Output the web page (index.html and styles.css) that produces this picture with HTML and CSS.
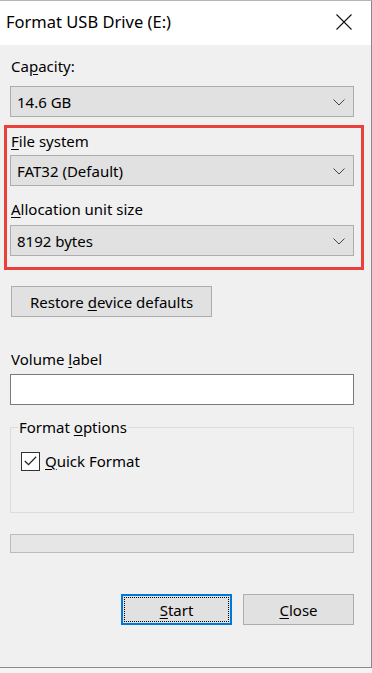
FILE: index.html
```html
<!DOCTYPE html>
<html lang="en">
<head>
  <meta charset="UTF-8" />
  <meta name="viewport" content="width=device-width, initial-scale=1.0" />
  <title>Format USB Drive (E:)</title>
  <link rel="stylesheet" href="styles.css">
</head>
<body>
  <div class="window">
    <div class="titlebar">
      <span class="title">Format USB Drive (E:)</span>
      <svg class="close-x" width="16" height="16" viewBox="0 0 16 16">
        <path d="M0.5 0.5 L15.5 15.5 M15.5 0.5 L0.5 15.5" stroke="#111" stroke-width="1.1" fill="none" />
      </svg>
    </div>

    <div class="content">
      <label class="field-label">Ca<u>p</u>acity:</label>
      <div class="select">
        <span>14.6 GB</span>
        <svg class="chevron" width="12" height="7" viewBox="0 0 12 7"><path d="M0.5 0.5 L6 6 L11.5 0.5" stroke="#444" fill="none" /></svg>
      </div>

      <div class="highlight">
        <label class="field-label"><u>F</u>ile system</label>
        <div class="select">
          <span>FAT32 (Default)</span>
          <svg class="chevron" width="12" height="7" viewBox="0 0 12 7"><path d="M0.5 0.5 L6 6 L11.5 0.5" stroke="#444" fill="none" /></svg>
        </div>
        <label class="field-label"><u>A</u>llocation unit size</label>
        <div class="select">
          <span>8192 bytes</span>
          <svg class="chevron" width="12" height="7" viewBox="0 0 12 7"><path d="M0.5 0.5 L6 6 L11.5 0.5" stroke="#444" fill="none" /></svg>
        </div>
      </div>

      <button class="btn restore">Restore <u>d</u>evice defaults</button>

      <label class="field-label volume">Volume <u>l</u>abel</label>
      <div class="textbox"></div>

      <fieldset class="group">
        <legend>Format <u>o</u>ptions</legend>
        <div class="check-row">
          <span class="checkbox">
            <svg width="13" height="10" viewBox="0 0 13 10"><path d="M0.8 5 L4.5 8.6 L12.2 0.8" stroke="#222" stroke-width="1.3" fill="none" /></svg>
          </span>
          <span><u>Q</u>uick Format</span>
        </div>
      </fieldset>

      <div class="progress"></div>

      <div class="actions">
        <button class="btn start"><span class="focus"><u>S</u>tart</span></button>
        <button class="btn"><u>C</u>lose</button>
      </div>
    </div>
  </div>
</body>
</html>
```

FILE: styles.css
```css
body {
  margin: 0;
  background-color: #f4f4f4;
  font-family: "Noto Sans", "Open Sans", sans-serif;
  color: #000;
}
.window {
  width: 371px;
  height: 666px;
  background-color: #f0f0f0;
  border-top: 1px solid #b5b5b5;
  border-right: 1px solid #8a8a8a;
  border-bottom: 1px solid #8a8a8a;
}
.titlebar {
  height: 44px;
  background-color: #fff;
  display: flex;
  align-items: center;
  justify-content: space-between;
  padding: 0 19px 0 6px;
}
.title {
  font-size: 16.5px;
  margin-top: -3px;
}
.close-x {
  margin-top: -2px;
}
.content {
  padding: 11px 17px 0 10px;
  font-size: 15px;
}
.field-label {
  display: block;
  line-height: 20px;
  padding-left: 1px;
  margin-bottom: 10px;
}
u {
  text-decoration-thickness: 1px;
  text-underline-offset: 2px;
}
.select {
  height: 29px;
  background-color: #e1e1e1;
  border: 1px solid #adadad;
  display: flex;
  align-items: center;
  justify-content: space-between;
  padding: 0 8px 0 6px;
}
.chevron {
  margin-top: 1px;
}
.highlight {
  margin: 8px -10px 0 -6px;
  border: 3px solid #e8403a;
  padding: 3px 7px 11px 3px;
}
.highlight .field-label {
  margin-bottom: 4px;
}
.highlight .select + .field-label {
  margin-top: 13px;
  margin-bottom: 6px;
}
.btn {
  font-family: inherit;
  font-size: 15px;
  color: #000;
  background-color: #e1e1e1;
  border: 1px solid #adadad;
  height: 31px;
  padding: 0;
}
.restore {
  display: block;
  width: 201px;
  margin: 16px 0 0 1px;
}
.volume {
  margin-top: 32px;
  margin-bottom: 5px;
}
.textbox {
  height: 29px;
  background-color: #fff;
  border: 1px solid #7a7a7a;
}
.group {
  margin: 12px 0 0 0;
  padding: 14px 10px 0 10px;
  height: 80px;
  border: 1px solid #dcdcdc;
}
.group legend {
  padding: 0 1px;
  margin-left: -3px;
  line-height: 20px;
}
.check-row {
  display: flex;
  align-items: center;
  gap: 5px;
  line-height: 20px;
}
.checkbox {
  width: 17px;
  height: 17px;
  border: 1px solid #333;
  background-color: #fff;
  display: flex;
  align-items: center;
  justify-content: center;
}
.progress {
  margin-top: 21px;
  height: 17px;
  background-color: #e6e6e6;
  border: 1px solid #bcbcbc;
}
.actions {
  display: flex;
  justify-content: flex-end;
  gap: 11px;
  margin-top: 41px;
}
.actions .btn {
  width: 111px;
}
.start {
  border: 2px solid #0078d7;
  padding: 1px;
}
.focus {
  display: flex;
  align-items: center;
  justify-content: center;
  height: 100%;
  border: 1px dotted #000;
  box-sizing: border-box;
}
```
